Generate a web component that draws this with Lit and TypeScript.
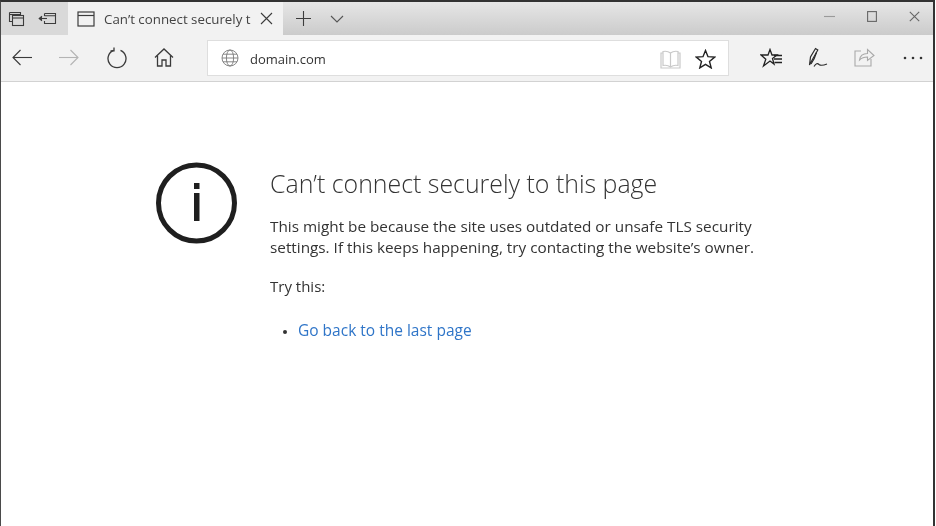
import { LitElement, html, css, svg } from 'lit';
import { customElement } from 'lit/decorators.js';

const icon = (w: number, h: number, color: string, body: unknown, sw = 1.1) => html`
  <svg width=${w} height=${h} viewBox="0 0 ${w} ${h}" fill="none" stroke=${color} stroke-width=${sw}>${body}</svg>
`;

const DARK = '#3c3c3c';

const icons = {
  tabsAside: icon(17, 16, DARK, svg`
    <path d="M1.5 1.5h11v3M1.5 1.5v9h3"/><path d="M1.5 3.5h11"/>
    <rect x="4.5" y="4.5" width="11" height="10"/><path d="M4.5 7h11"/>`),
  tabsBack: icon(19, 13, DARK, svg`
    <path d="M6.5 1.5h11v10h-11v-2.5M6.5 1.5v2.5M6.5 3.8h11"/>
    <path d="M1 6.5h8"/><path d="M4 4.2L1.2 6.5L4 8.8" fill="${DARK}"/>`),
  tab: icon(18, 16, DARK, svg`<rect x="1" y="1" width="16" height="14"/><path d="M1 4.5h16"/>`, 1.2),
  close: icon(13, 13, DARK, svg`<path d="M1 1l11 11M12 1L1 12"/>`),
  plus: icon(15, 15, DARK, svg`<path d="M7.5 0v15M0 7.5h15"/>`),
  chevron: icon(14, 8, '#555', svg`<path d="M1 1l6 6l6-6"/>`),
  minimize: icon(11, 3, '#9a9a9a', svg`<path d="M0 1.5h11"/>`),
  maximize: icon(10, 11, '#666', svg`<rect x=".6" y=".6" width="8.8" height="9.8"/>`, 1.1),
  winClose: icon(11, 11, '#666', svg`<path d="M.8.8l9.4 9.4M10.2.8L.8 10.2"/>`),
  back: icon(20, 17, '#3a3a3a', svg`<path d="M1 8.5h19"/><path d="M8.5 1L1 8.5L8.5 16"/>`),
  forward: icon(20, 17, '#b4b4b4', svg`<path d="M0 8.5h19"/><path d="M11.5 1L19 8.5L11.500 16"/>`),
  refresh: icon(20, 22, '#3a3a3a', svg`<path d="M6.500 3.400A9 9 0 1 0 13.500 3.400"/><path d="M7 .5V3.800H3.500"/>`, 1.3),
  home: icon(20, 19, '#3a3a3a', svg`
    <path d="M1 9.5L10 1L19 9.5"/><path d="M3.5 7.5V18H8V12H12V18H16.5V7.5"/>`, 1.3),
  globe: icon(18, 18, '#7a7a7a', svg`
    <circle cx="9" cy="9" r="8"/><ellipse cx="9" cy="9" rx="3.6" ry="8"/>
    <path d="M1 9h16M2 5.2h14M2 12.8h14"/>`, .9),
  book: icon(21, 19, '#c9c9c9', svg`
    <path d="M10.5 3C8.5 1.500 5.500 1 3 1.500V15.500C5.500 15 8.500 15.500 10.500 17C12.500 15.500 15.500 15 18 15.500V1.500C15.500 1 12.500 1.500 10.500 3V17"/>
    <path d="M3 3H1V18H20V3H18"/>`, 1.2),
  star: icon(21, 20, '#222', svg`<path d="M10.500 1.500L13 7.700L19.700 8.100L14.500 12.400L16.200 18.900L10.500 15.300L4.800 18.900L6.500 12.400L1.300 8.100L8 7.700Z"/>`, 1.4),
  favorites: icon(22, 20, '#222', svg`
    <path d="M10 1.500L12 7H17L12.500 10.500L14 16L10 13L3.500 18L5.800 11.200L1 7H8Z"/>
    <path d="M14 7.500h8M14 11h8M14.500 14.500h7.500"/>`, 1.3),
  pen: icon(20, 21, '#2c2c2c', svg`
    <path d="M1.500 18L2.500 10L7.500 1.500L9.800 3L5 11.500Z"/><path d="M3 17C5 14 7.500 9 8.500 5.500"/>
    <path d="M6 19.500C8 16.500 9.500 16 11 17.500C13 19 15 18.500 19 17"/>`, 1.2),
  share: icon(21, 19, '#a9a9a9', svg`
    <path d="M7 3H1V18H17V11"/>
    <path d="M5.500 12C6 8 9 5.500 13.500 5.500V1.500L20 7.500L13.500 12.500V9C10 9 7.500 10 5.500 12Z"/>`, 1.1),
  more: html`<svg width="20" height="4" viewBox="0 0 20 4" fill="#333"><circle cx="2" cy="2" r="1.300"/><circle cx="10" cy="2" r="1.300"/><circle cx="18" cy="2" r="1.300"/></svg>`,
  info: html`<svg width="82" height="82" viewBox="0 0 82 82" fill="none">
    <circle cx="41.500" cy="41" r="38" stroke="#1f1f1f" stroke-width="5"/>
    <rect x="39" y="21" width="5.500" height="6" fill="#1f1f1f"/>
    <rect x="39" y="31" width="5.500" height="28" fill="#1f1f1f"/>
  </svg>`,
};

@customElement('app-root')
export class AppRoot extends LitElement {
  static styles = css`
    :host {
      display: flex;
      flex-direction: column;
      width: 935px;
      height: 526px;
      box-sizing: border-box;
      border-top: 2px solid #333;
      border-left: 1px solid #4a4a4a;
      border-right: 2px solid #333;
      background: #fff;
      font-family: "Open Sans", "Noto Sans", sans-serif;
      color: #333;
    }

    .tabbar {
      display: flex;
      align-items: stretch;
      height: 33px;
      background: linear-gradient(#e6e6e6, #cbcbcb);
      filter: blur(0.35px);
    }

    .tab-tools {
      display: flex;
      align-items: center;
      width: 67px;
      padding-left: 7px;
      gap: 13px;
      box-sizing: border-box;
      background: #d9d9d9;
    }

    .tab {
      display: flex;
      align-items: center;
      justify-content: space-between;
      width: 215px;
      padding: 0 10px 0 9px;
      box-sizing: border-box;
      background: #f2f2f2;
    }

    .tab-title {
      flex: 1;
      margin-left: 9px;
      font-size: 13.300px;
      color: #444;
      white-space: nowrap;
    }

    .tab-actions {
      display: flex;
      align-items: center;
      gap: 19px;
      padding-left: 13px;
      flex: 1;
    }

    .window-buttons {
      display: flex;
      align-items: center;
      gap: 32px;
      padding-right: 13px;
      padding-bottom: 5px;
    }

    .toolbar {
      display: flex;
      align-items: center;
      height: 47px;
      box-sizing: border-box;
      padding-bottom: 1px;
      background: #f2f2f2;
      border-bottom: 1px solid #d2d2d2;
      filter: blur(0.35px);
    }

    .nav {
      display: flex;
      align-items: center;
      width: 206px;
      padding-left: 11px;
      box-sizing: border-box;
    }

    .nav svg:nth-child(2) { margin-left: 27px; }
    .nav svg:nth-child(3) { margin-left: 28px; }
    .nav svg:nth-child(4) { margin-left: 27px; }

    .address {
      display: flex;
      align-items: center;
      width: 522px;
      height: 36px;
      box-sizing: border-box;
      padding: 0 12px 0 13px;
      background: #fff;
      border: 1px solid #dedede;
    }

    .url {
      flex: 1;
      margin-left: 11px;
      padding-top: 2px;
      font-size: 13px;
      color: #333;
    }

    .book {
      display: flex;
      margin-right: 14px;
      padding-top: 3px;
    }

    .star {
      display: flex;
      padding-top: 2px;
    }

    .tools {
      display: flex;
      align-items: center;
      padding-left: 31px;
    }

    .tools svg:nth-child(2) { margin-left: 26px; }
    .tools svg:nth-child(3) { margin-left: 26px; }
    .tools svg:nth-child(4) { margin-left: 28px; }

    main {
      flex: 1;
      display: flex;
      align-items: flex-start;
      gap: 33px;
      padding: 80px 0 0 154px;
      filter: blur(0.3px);
    }

    .copy { padding-top: 3px; }

    h1 {
      margin: 0;
      font-size: 24.900px;
      font-weight: 300;
      line-height: 36px;
      color: #333;
    }

    p {
      margin: 15px 0 0;
      font-size: 15.300px;
      line-height: 21px;
      color: #333;
    }

    p.try {
      margin-top: 18px;
      font-size: 15px;
    }

    ul {
      margin: 23px 0 0;
      padding: 0 0 0 28px;
      font-size: 15.500px;
      line-height: 21px;
    }

    li::marker {
      font-size: 11px;
      color: #333;
    }

    a {
      color: #2f75c8;
      text-decoration: none;
    }
  `;

  render() {
    return html`
      <div class="tabbar">
        <div class="tab-tools">${icons.tabsAside}${icons.tabsBack}</div>
        <div class="tab">
          ${icons.tab}
          <span class="tab-title">Can’t connect securely t</span>
          ${icons.close}
        </div>
        <div class="tab-actions">${icons.plus}${icons.chevron}</div>
        <div class="window-buttons">${icons.minimize}${icons.maximize}${icons.winClose}</div>
      </div>
      <div class="toolbar">
        <div class="nav">${icons.back}${icons.forward}${icons.refresh}${icons.home}</div>
        <div class="address">
          ${icons.globe}
          <span class="url">domain.com</span>
          <span class="book">${icons.book}</span>
          <span class="star">${icons.star}</span>
        </div>
        <div class="tools">${icons.favorites}${icons.pen}${icons.share}${icons.more}</div>
      </div>
      <main>
        ${icons.info}
        <div class="copy">
          <h1>Can’t connect securely to this page</h1>
          <p>This might be because the site uses outdated or unsafe TLS security<br>settings. If this keeps happening, try contacting the website’s owner.</p>
          <p class="try">Try this:</p>
          <ul><li><a href="#">Go back to the last page</a></li></ul>
        </div>
      </main>
    `;
  }
}
